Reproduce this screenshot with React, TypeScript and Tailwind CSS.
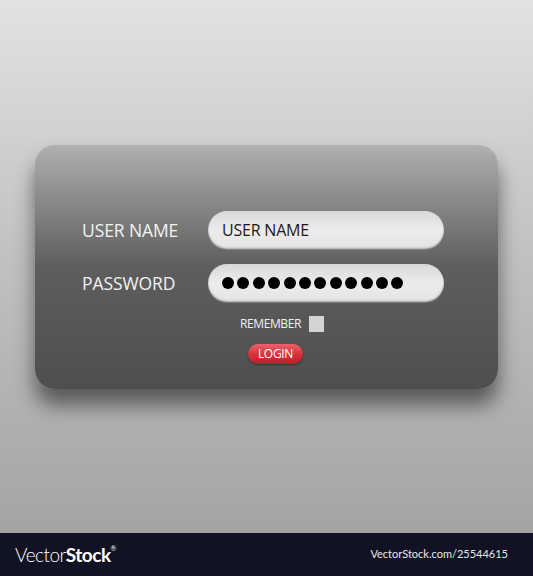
import React from 'react';

const App: React.FC = () => {
  const dots = Array.from({ length: 12 });

  return (
    <div className="w-[533px] h-[576px] flex flex-col overflow-hidden font-['Open_Sans',sans-serif]">
      {/* Stage */}
      <div className="flex-1 bg-gradient-to-b from-[#e2e2e2] via-[#c0c0c0] to-[#a4a4a4] pt-[145px] px-[35px]">
        {/* Card */}
        <div className="w-[463px] h-[244px] rounded-[20px] bg-gradient-to-b from-[#b0b0b0] via-[#5e5e5e] to-[#4e4e4e] shadow-[0_16px_20px_rgba(0,0,0,0.5)] pt-[66px] pl-[47px]">
          <div className="flex flex-col gap-[15px]">
            <div className="flex items-center">
              <span className="w-[126px] text-[17.5px] text-[#f2f2f2] tracking-[-0.1px]">USER NAME</span>
              <div className="w-[236px] h-[38px] rounded-full bg-gradient-to-b from-[#d9d9d9] via-[#ececec] to-[#e4e4e4] shadow-[inset_0_-1px_2px_rgba(0,0,0,0.25),0_1px_1px_rgba(255,255,255,0.2)] flex items-center pl-[14px]">
                <span className="text-[16px] text-[#1a1a1a] tracking-[-0.2px]">USER NAME</span>
              </div>
            </div>
            <div className="flex items-center">
              <span className="w-[126px] text-[17.5px] text-[#f2f2f2] tracking-[-0.1px]">PASSWORD</span>
              <div className="w-[236px] h-[38px] rounded-full bg-gradient-to-b from-[#d9d9d9] via-[#ececec] to-[#e4e4e4] shadow-[inset_0_-1px_2px_rgba(0,0,0,0.25),0_1px_1px_rgba(255,255,255,0.2)] flex items-center pl-[14px] gap-[3.4px]">
                {dots.map((_, i) => (
                  <span key={i} className="w-[12px] h-[12px] rounded-full bg-black" />
                ))}
              </div>
            </div>
          </div>

          <div className="flex items-center gap-[8px] ml-[158px] mt-[13px]">
            <span className="text-[12px] text-[#f0f0f0] tracking-[-0.4px]">REMEMBER</span>
            <span className="w-[15px] h-[16px] bg-[#d4d4d4]" />
          </div>

          <div className="ml-[166px] mt-[11px] w-[55px] h-[20px] rounded-full bg-gradient-to-b from-[#f0606a] via-[#d7323c] to-[#b8212b] shadow-[0_1px_2px_rgba(0,0,0,0.4)] flex items-center justify-center">
            <span className="text-[12px] text-white tracking-[-0.3px]">LOGIN</span>
          </div>
        </div>
      </div>

      {/* Footer */}
      <div className="h-[43px] bg-[#111224] flex items-center justify-between px-[15px]">
        <span className="text-[19px] text-white font-['Lato',sans-serif] tracking-[-0.5px] leading-none">
          <span className="font-light">Vector</span>
          <span className="font-bold">Stock</span>
          <sup className="text-[7px] align-super">®</sup>
        </span>
        <span className="text-[11px] text-[#e8e8e8] font-['Lato',sans-serif] mr-[10px]">VectorStock.com/25544615</span>
      </div>
    </div>
  );
};

export default App;
